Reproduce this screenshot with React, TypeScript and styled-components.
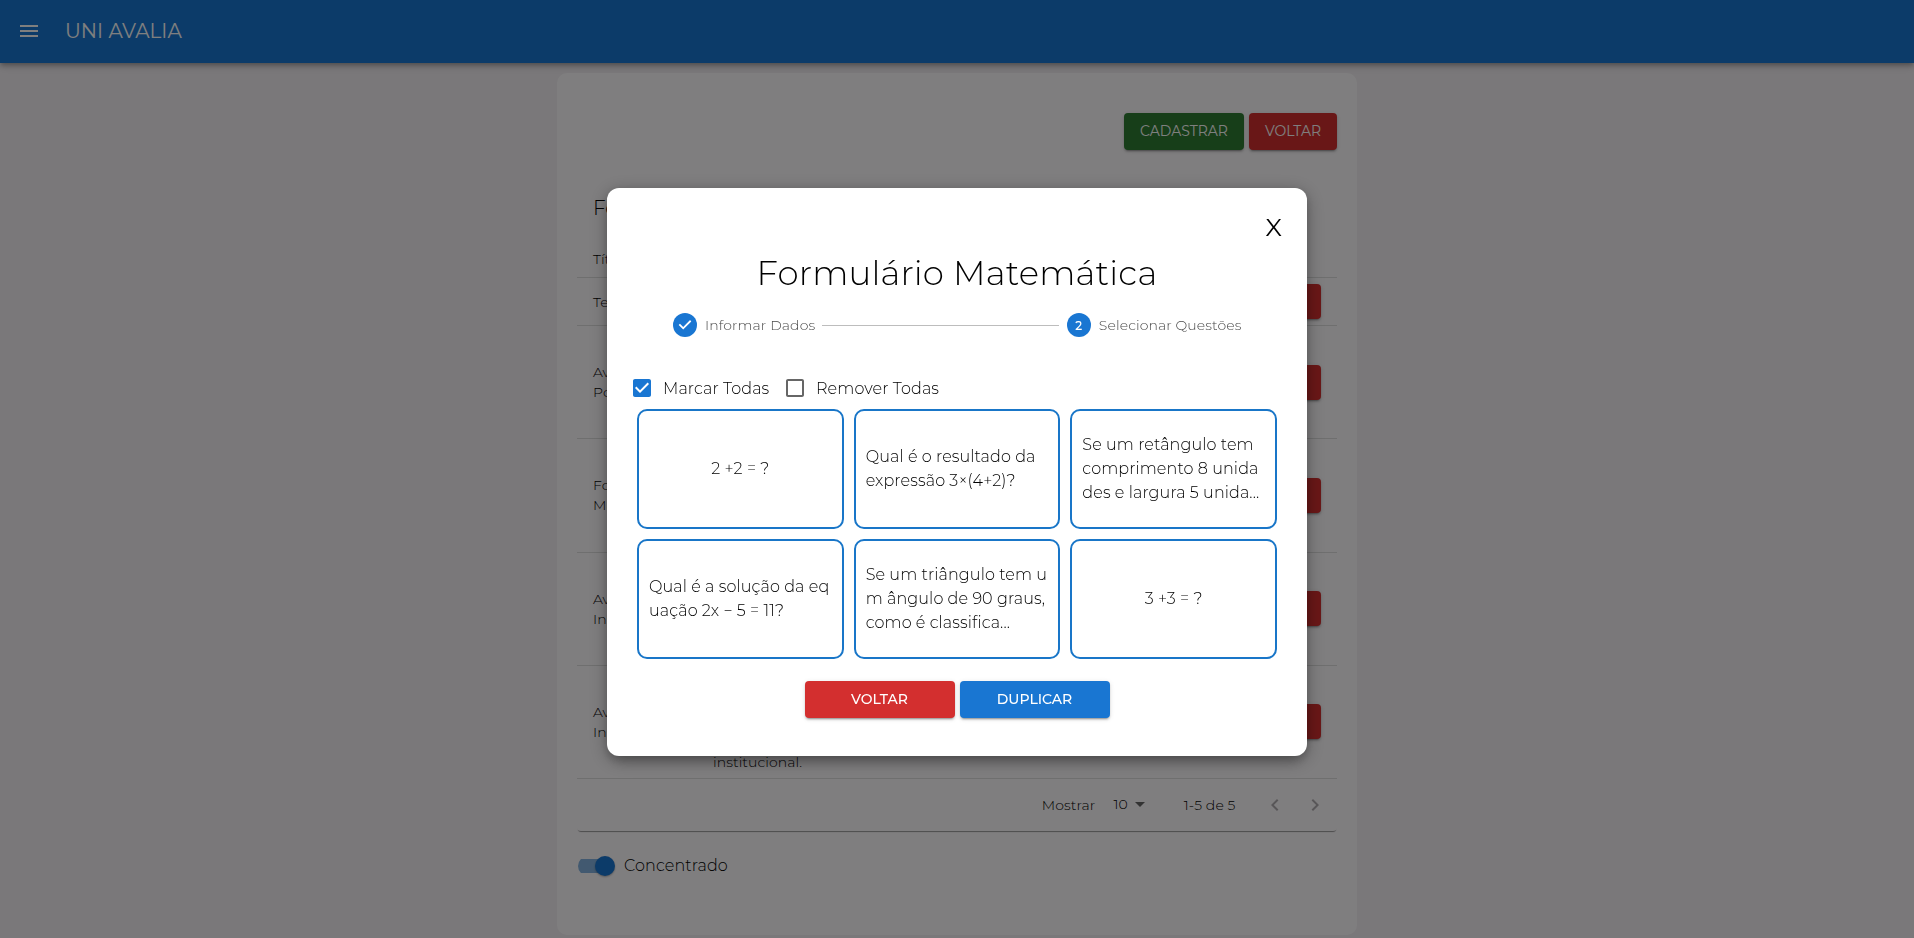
import React from 'react';
import styled, { createGlobalStyle } from 'styled-components';

const GlobalStyle = createGlobalStyle`
  * { box-sizing: border-box; }
  html, body { margin: 0; height: 100%; overflow: hidden; }
  body {
    background: #f4f0f4;
    font-family: Montserrat, Inter, "Open Sans", sans-serif;
    font-weight: 300;
    color: #000;
  }
  button { font-family: inherit; }
`;

const Text = styled.span<{ $size?: number; $track?: number; $weight?: number }>`
  font-size: ${p => p.$size ?? 14}px;
  letter-spacing: ${p => p.$track ?? 0.1}px;
  font-weight: ${p => p.$weight ?? 300};
  white-space: nowrap;
`;

const AppBar = styled.header`
  position: relative;
  height: 63px;
  display: flex;
  align-items: center;
  padding: 0 17px 1px;
  gap: 24px;
  background: #1976d2;
  color: #fff;
  box-shadow: 0 2px 4px -1px rgba(0,0,0,.2), 0 4px 5px rgba(0,0,0,.14), 0 1px 10px rgba(0,0,0,.12);
`;

const Page = styled.main`
  display: flex;
  justify-content: center;
  padding-top: 10px;
`;

const Panel = styled.section`
  width: 800px;
  height: 862px;
  border-radius: 10px;
  background: #fffdff;
  padding: 40px 20px 0;
`;

const Actions = styled.div`
  display: flex;
  justify-content: flex-end;
  gap: 5px;
  margin-bottom: 27.5px;
`;

const Button = styled.button<{ $bg: string; $w?: number; $h?: number }>`
  display: inline-flex;
  align-items: center;
  justify-content: center;
  width: ${p => p.$w ?? 88}px;
  height: ${p => p.$h ?? 36.5}px;
  padding: 0;
  border: 0;
  border-radius: 4px;
  background: ${p => p.$bg};
  color: #fff;
  box-shadow: 0 3px 1px -2px rgba(0,0,0,.2), 0 2px 2px rgba(0,0,0,.14), 0 1px 5px rgba(0,0,0,.12);
`;

const TableCard = styled.div`
  border-radius: 4px;
  box-shadow: 0 2px 1px -1px rgba(0,0,0,.4);
`;

const TableTitle = styled.div`
  height: 63px;
  display: flex;
  align-items: center;
  padding: 0 16px 2px;
`;

const Row = styled.div<{ $h: number }>`
  display: grid;
  grid-template-columns: 120px 1fr auto;
  align-items: center;
  height: ${p => p.$h}px;
  border-bottom: 1px solid #dedede;
  line-height: 20px;
`;

const Cell = styled.div`
  display: flex;
  flex-direction: column;
  padding: 0 16px;
`;

const Footer = styled.div`
  height: 52.5px;
  display: flex;
  align-items: center;
  justify-content: flex-end;
  padding-right: 10px;
`;

const PageSize = styled.div`
  display: flex;
  align-items: center;
  margin: 0 32px 2px 18px;
`;

const Pager = styled.div`
  display: flex;
  align-items: center;
  gap: 16px;
  margin-left: 27.5px;
  color: #b0adb0;
  svg { display: block; }
`;

const SwitchRow = styled.div`
  display: flex;
  align-items: center;
  gap: 9px;
  height: 38px;
  margin-top: 15.5px;
  padding-left: 1px;
`;

const Track = styled.span`
  width: 37px;
  height: 20px;
  display: flex;
  align-items: center;
  justify-content: flex-end;
  background: linear-gradient(#84b3e0, #84b3e0) 0 3px / 34px 14px no-repeat;
  border-radius: 10px;
`;

const Thumb = styled.span`
  width: 20px;
  height: 20px;
  border-radius: 50%;
  background: #1976d2;
  box-shadow: 0 1px 2px rgba(0,0,0,.3);
`;

const Backdrop = styled.div`
  position: fixed;
  inset: 0;
  display: flex;
  justify-content: center;
  align-items: flex-start;
  padding-top: 187.5px;
  background: rgba(0, 0, 0, 0.5);
`;

const Modal = styled.div`
  width: 700px;
  height: 568px;
  padding: 20.5px 30px 0;
  border-radius: 12px;
  background: #fff;
  box-shadow: 0 11px 15px -7px rgba(0,0,0,.2), 0 4px 18px 2px rgba(0,0,0,.22), 0 3px 10px rgba(0,0,0,.16);
`;

const CloseRow = styled.div`
  display: flex;
  justify-content: flex-end;
  height: 37px;
  align-items: center;
  margin-right: -5px;
`;

const Title = styled.h1`
  margin: 7px 0 0;
  height: 42px;
  display: flex;
  align-items: center;
  justify-content: center;
  font-weight: 300;
`;

const Stepper = styled.div`
  display: flex;
  align-items: center;
  height: 24px;
  margin: 19px 35.5px 0 36px;
  color: #4a4a4a;
`;

const StepDot = styled.span`
  display: flex;
  align-items: center;
  justify-content: center;
  width: 24px;
  height: 24px;
  margin-right: 8px;
  border-radius: 50%;
  background: #1976d2;
  color: #fff;
`;

const StepLine = styled.span`
  flex: 1;
  height: 1px;
  margin: 0 8px 0 7px;
  background: #bdbdbd;
`;

const Checks = styled.div`
  display: flex;
  align-items: center;
  height: 42px;
  margin: 30px 0 0 -7px;
`;

const CheckLabel = styled.label<{ $w: number }>`
  display: flex;
  align-items: center;
  gap: 9px;
  width: ${p => p.$w}px;
  svg { display: block; }
`;

const Grid = styled.div`
  display: grid;
  grid-template-columns: repeat(3, 1fr);
  grid-auto-rows: 120px;
  gap: 10px;
`;

const Card = styled.div<{ $center?: boolean }>`
  display: flex;
  flex-direction: column;
  justify-content: center;
  align-items: ${p => (p.$center ? 'center' : 'flex-start')};
  padding: 0 10px;
  border: 2px solid #1976c8;
  border-radius: 10px;
  line-height: 24px;
`;

const ModalActions = styled.div`
  display: flex;
  justify-content: center;
  gap: 5px;
  margin-top: 22px;
`;

const rows = [
  { h: 48, name: ['Teste'], text: [] },
  { h: 113, name: ['Avaliação', 'Política'], text: [] },
  { h: 113.5, name: ['Formulário', 'Matemática'], text: [] },
  { h: 113, name: ['Avaliação', 'Institucional'], text: [] },
  {
    h: 113,
    name: ['Avaliação', 'Institucional'],
    text: ['Formulário destinado', 'à comunidade', 'acadêmica para a', 'autoavaliação', 'institucional.'],
  },
];

const questions = [
  ['2 +2 = ?'],
  ['Qual é o resultado da', 'expressão 3×(4+2)?'],
  ['Se um retângulo tem', 'comprimento 8 unida', 'des e largura 5 unida...'],
  ['Qual é a solução da eq', 'uação 2x − 5 = 11?'],
  ['Se um triângulo tem u', 'm ângulo de 90 graus,', 'como é classifica...'],
  ['3 +3 = ?'],
];

export default function App() {
  return (
    <>
      <GlobalStyle />
      <AppBar>
        <svg width="24" height="24" viewBox="0 0 24 24" fill="currentColor"><path d="M3 18h18v-2H3v2zm0-5h18v-2H3v2zm0-7v2h18V6H3z" /></svg>
        <Text $size={20} $weight={400} $track={0}>UNI AVALIA</Text>
      </AppBar>
      <Page>
        <Panel>
          <Actions>
            <Button $bg="#2e7d32" $w={120}><Text $weight={400} $track={0}>CADASTRAR</Text></Button>
            <Button $bg="#d32f2f"><Text $weight={400} $track={0}>VOLTAR</Text></Button>
          </Actions>
          <TableCard>
            <TableTitle><Text $size={20}>Formulários</Text></TableTitle>
            <Row $h={38}><Cell><Text>Título</Text></Cell></Row>
            {rows.map((r, i) => (
              <Row key={i} $h={r.h}>
                <Cell>{r.name.map(t => <Text key={t}>{t}</Text>)}</Cell>
                <Cell>{r.text.map(t => <Text key={t}>{t}</Text>)}</Cell>
                <Cell><Button $bg="#d32f2f" $h={35} aria-label="Excluir" /></Cell>
              </Row>
            ))}
            <Footer>
              <Text>Mostrar</Text>
              <PageSize>
                <Text>10</Text>
                <svg width="24" height="24" viewBox="0 0 24 24" fill="#666"><path d="M7 10l5 5 5-5z" /></svg>
              </PageSize>
              <Text>1-5 de 5</Text>
              <Pager>
                <svg width="24" height="24" viewBox="0 0 24 24" fill="currentColor"><path d="M15.41 7.41L14 6l-6 6 6 6 1.41-1.41L10.83 12z" /></svg>
                <svg width="24" height="24" viewBox="0 0 24 24" fill="currentColor"><path d="M10 6L8.59 7.41 13.17 12l-4.58 4.59L10 18l6-6z" /></svg>
              </Pager>
            </Footer>
          </TableCard>
          <SwitchRow>
            <Track><Thumb /></Track>
            <Text $size={16}>Concentrado</Text>
          </SwitchRow>
        </Panel>
      </Page>
      <Backdrop>
        <Modal>
          <CloseRow><Text $size={25} $weight={400} $track={0}>X</Text></CloseRow>
          <Title><Text $size={34} $track={0.18}>Formulário Matemática</Text></Title>
          <Stepper>
            <StepDot><svg width="24" height="24" viewBox="0 0 24 24" fill="currentColor"><path d="M10 17l-5-5 1.41-1.41L10 14.17l7.59-7.59L19 8z" transform="translate(1.2 1.2) scale(.9)" /></svg></StepDot>
            <Text>Informar Dados</Text>
            <StepLine />
            <StepDot><Text $size={12} $weight={500}>2</Text></StepDot>
            <Text>Selecionar Questões</Text>
          </Stepper>
          <Checks>
            <CheckLabel $w={153}>
              <svg width="24" height="24" viewBox="0 0 24 24" fill="#1976d2"><path d="M19 3H5c-1.11 0-2 .9-2 2v14c0 1.1.89 2 2 2h14c1.11 0 2-.9 2-2V5c0-1.1-.89-2-2-2zm-9 14l-5-5 1.41-1.41L10 14.17l7.59-7.59L19 8l-9 9z" /></svg>
              <Text $size={16}>Marcar Todas</Text>
            </CheckLabel>
            <CheckLabel $w={180}>
              <svg width="24" height="24" viewBox="0 0 24 24" fill="#666"><path d="M19 5v14H5V5h14m0-2H5c-1.1 0-2 .9-2 2v14c0 1.1.9 2 2 2h14c1.1 0 2-.9 2-2V5c0-1.1-.9-2-2-2z" /></svg>
              <Text $size={16}>Remover Todas</Text>
            </CheckLabel>
          </Checks>
          <Grid>
            {questions.map((q, i) => (
              <Card key={i} $center={q.length === 1}>
                {q.map(t => <Text key={t} $size={16}>{t}</Text>)}
              </Card>
            ))}
          </Grid>
          <ModalActions>
            <Button $bg="#d32f2f" $w={150}><Text $weight={500} $track={0}>VOLTAR</Text></Button>
            <Button $bg="#1976d2" $w={150}><Text $weight={500} $track={0}>DUPLICAR</Text></Button>
          </ModalActions>
        </Modal>
      </Backdrop>
    </>
  );
}
